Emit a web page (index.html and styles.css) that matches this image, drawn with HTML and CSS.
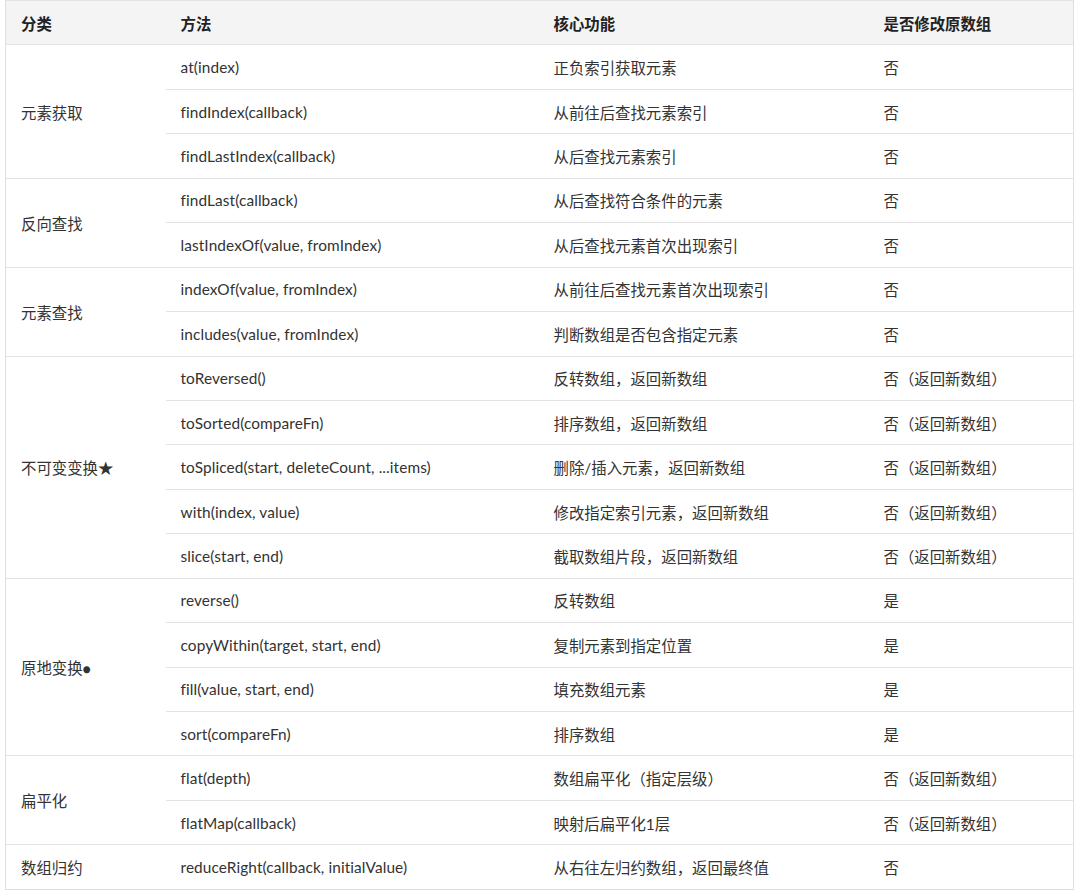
FILE: index.html
```html
<!DOCTYPE html>
<html lang="zh">
<head>
<meta charset="utf-8">
<link rel="stylesheet" href="styles.css">
</head>
<body>
<table class="methods">
  <colgroup>
    <col class="c1"><col class="c2"><col class="c3"><col class="c4">
  </colgroup>
  <thead>
    <tr><th>分类</th><th>方法</th><th>核心功能</th><th>是否修改原数组</th></tr>
  </thead>
  <tbody>
    <tr><td rowspan="3">元素获取</td><td class="m">at(index)</td><td>正负索引获取元素</td><td>否</td></tr>
    <tr><td class="m">findIndex(callback)</td><td>从前往后查找元素索引</td><td>否</td></tr>
    <tr><td class="m">findLastIndex(callback)</td><td>从后查找元素索引</td><td>否</td></tr>
    <tr><td rowspan="2">反向查找</td><td class="m">findLast(callback)</td><td>从后查找符合条件的元素</td><td>否</td></tr>
    <tr><td class="m">lastIndexOf(value, fromIndex)</td><td>从后查找元素首次出现索引</td><td>否</td></tr>
    <tr><td rowspan="2">元素查找</td><td class="m">indexOf(value, fromIndex)</td><td>从前往后查找元素首次出现索引</td><td>否</td></tr>
    <tr><td class="m">includes(value, fromIndex)</td><td>判断数组是否包含指定元素</td><td>否</td></tr>
    <tr><td rowspan="5">不可变变换<span class="mark">★</span></td><td class="m">toReversed()</td><td>反转数组，返回新数组</td><td>否（返回新数组）</td></tr>
    <tr><td class="m">toSorted(compareFn)</td><td>排序数组，返回新数组</td><td>否（返回新数组）</td></tr>
    <tr><td class="m">toSpliced(start, deleteCount, ...items)</td><td>删除/插入元素，返回新数组</td><td>否（返回新数组）</td></tr>
    <tr><td class="m">with(index, value)</td><td>修改指定索引元素，返回新数组</td><td>否（返回新数组）</td></tr>
    <tr><td class="m">slice(start, end)</td><td>截取数组片段，返回新数组</td><td>否（返回新数组）</td></tr>
    <tr><td rowspan="4">原地变换<span class="dot">●</span></td><td class="m">reverse()</td><td>反转数组</td><td>是</td></tr>
    <tr><td class="m">copyWithin(target, start, end)</td><td>复制元素到指定位置</td><td>是</td></tr>
    <tr><td class="m">fill(value, start, end)</td><td>填充数组元素</td><td>是</td></tr>
    <tr><td class="m">sort(compareFn)</td><td>排序数组</td><td>是</td></tr>
    <tr><td rowspan="2">扁平化</td><td class="m">flat(depth)</td><td>数组扁平化（指定层级）</td><td>否（返回新数组）</td></tr>
    <tr><td class="m">flatMap(callback)</td><td>映射后扁平化1层</td><td>否（返回新数组）</td></tr>
    <tr><td>数组归约</td><td class="m">reduceRight(callback, initialValue)</td><td>从右往左归约数组，返回最终值</td><td>否</td></tr>
  </tbody>
</table>
</body>
</html>
```
FILE: styles.css
```css
html, body {
  margin: 0;
  padding: 0;
  background: #ffffff;
}
body {
  padding: 0 7px 0 5px;
  font-family: "Lato", "Noto Sans CJK SC", sans-serif;
  font-size: 15.4px;
  color: #333333;
}
.methods {
  width: 1068px;
  border-collapse: collapse;
  table-layout: fixed;
  border: 1px solid #dfdfdf;
}
.c1 { width: 160px; }
.c2 { width: 373px; }
.c3 { width: 330px; }
.c4 { width: 205px; }
.methods th,
.methods td {
  height: 44.45px;
  padding: 0 0 0 15px;
  text-align: left;
  vertical-align: middle;
  border-top: 1px solid #e2e2e2;
  white-space: nowrap;
  box-sizing: border-box;
}
.methods th {
  background: #f4f4f4;
  font-weight: bold;
  color: #222222;
}
.methods td.m {
  letter-spacing: 0.1px;
}
.dot {
  font-size: 14px;
}
```
